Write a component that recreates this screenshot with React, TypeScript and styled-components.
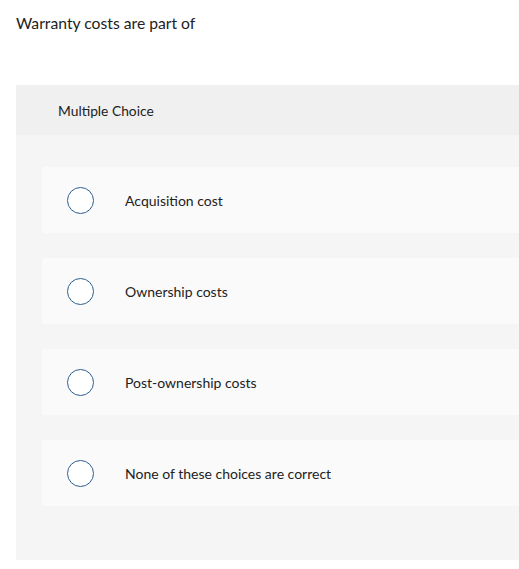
import React from "react";
import styled, { createGlobalStyle } from "styled-components";

const Global = createGlobalStyle`
  html, body { margin: 0; padding: 0; background: #fff; }
  body { font-family: Lato, "Open Sans", "Liberation Sans", sans-serif; color: #1f1f1f; }
`;

const Page = styled.div`
  padding: 12px 0 0 16px;
`;

const Prompt = styled.p`
  margin: 0;
  font-size: 15.7px;
  line-height: 22px;
  color: #222;
`;

const Panel = styled.section`
  margin-top: 51px;
  background: #f5f5f5;
  border-radius: 2px 0 0 2px;
  padding-bottom: 54px;
`;

const Header = styled.div`
  height: 50px;
  display: flex;
  align-items: center;
  padding-left: 42px;
  background: #f0f0f0;
  font-size: 13.8px;
  color: #222;
`;

const Options = styled.div`
  display: flex;
  flex-direction: column;
  gap: 25px;
  padding: 32px 0 0 26px;
`;

const Option = styled.label`
  height: 66px;
  display: flex;
  align-items: center;
  background: #fafafa;
  border-radius: 3px 0 0 3px;
  padding-left: 25px;
  cursor: pointer;
`;

const Radio = styled.span`
  width: 25px;
  height: 25px;
  border-radius: 50%;
  border: 1.5px solid #2d5e91;
  background: #fff;
  flex: none;
`;

const Label = styled.span`
  margin-left: 31px;
  font-size: 14px;
  color: #222;
`;

const choices = [
  "Acquisition cost",
  "Ownership costs",
  "Post-ownership costs",
  "None of these choices are correct",
];

export default function App() {
  return (
    <>
      <Global />
      <Page>
        <Prompt>Warranty costs are part of</Prompt>
        <Panel>
          <Header>Multiple Choice</Header>
          <Options>
            {choices.map((c) => (
              <Option key={c}>
                <Radio />
                <Label>{c}</Label>
              </Option>
            ))}
          </Options>
        </Panel>
      </Page>
    </>
  );
}
